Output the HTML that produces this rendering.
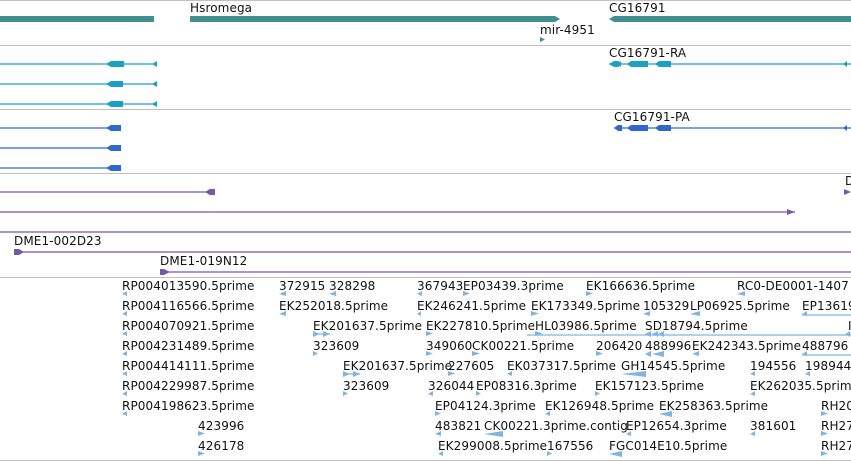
<!DOCTYPE html>
<html><head><meta charset="utf-8"><style>
html,body{margin:0;padding:0;background:#fff;width:851px;height:461px;overflow:hidden}
svg{display:block}
text{font-family:"DejaVu Sans","Liberation Sans",sans-serif;font-size:12px;letter-spacing:0.1px;fill:#111}
</style></head><body>
<svg width="851" height="461" xmlns="http://www.w3.org/2000/svg">
<g stroke="#c0c0c0" stroke-width="1">
<line x1="0" y1="0.5" x2="851" y2="0.5"/><line x1="0" y1="45.5" x2="851" y2="45.5"/>
<line x1="0" y1="109.5" x2="851" y2="109.5"/><line x1="0" y1="173.5" x2="851" y2="173.5"/>
<line x1="0" y1="277.5" x2="851" y2="277.5"/><line x1="0" y1="460.5" x2="851" y2="460.5"/>
</g>
<g fill="#3f8f93">
<rect x="0" y="16" width="154" height="6"/>
<polygon points="190,16 555,16 560,19 555,22 190,22"/>
<polygon points="609,19 614,16 851,16 851,22 614,22"/>
<polygon points="540,37 545,39.5 540,42"/>
</g>
<text x="190" y="12">Hsromega</text><text x="609" y="12">CG16791</text><text x="540" y="34">mir-4951</text>
<g stroke="#1aa0c2" stroke-width="1.3">
<line x1="0" y1="64" x2="157" y2="64"/><line x1="0" y1="84" x2="157" y2="84"/><line x1="0" y1="104" x2="157" y2="104"/>
<line x1="609" y1="64" x2="851" y2="64"/>
</g>
<g fill="#1aa0c2">
<polygon points="106,64 111,61 124,61 124,67 111,67"/><polygon points="106,84 111,81 123,81 123,87 111,87"/><polygon points="106,104 111,101 123,101 123,107 111,107"/>
<polygon points="152,64 157,61 157,67"/><polygon points="152,84 157,81 157,87"/><polygon points="152,104 157,101 157,107"/>
<polygon points="609,64 614,61 619,61 619,67 614,67"/><polygon points="617,64 621,61 621,67"/>
<polygon points="627,64 631,61 648,61 648,67 631,67"/><polygon points="655,64 659,61 671,61 671,67 659,67"/>
<polygon points="843,64 847,61 847,67"/>
</g>
<text x="609" y="57">CG16791-RA</text>
<g stroke="#2e6acc" stroke-width="1.3">
<line x1="0" y1="128" x2="121" y2="128"/><line x1="0" y1="148" x2="121" y2="148"/><line x1="0" y1="168" x2="121" y2="168"/>
<line x1="614" y1="128" x2="851" y2="128"/>
</g>
<g fill="#2e6acc">
<polygon points="106,128 111,125 121,125 121,131 111,131"/><polygon points="106,148 111,145 121,145 121,151 111,151"/><polygon points="106,168 111,165 121,165 121,171 111,171"/>
<polygon points="614,128 618,125 622,125 622,131 618,131"/>
<polygon points="627,128 631,125 648,125 648,131 631,131"/><polygon points="655,128 659,125 671,125 671,131 659,131"/>
<polygon points="843,128 847,125 847,131"/>
</g>
<text x="614" y="121">CG16791-PA</text>
<g stroke="#7657b0" stroke-width="1.3">
<line x1="0" y1="192" x2="210" y2="192"/><line x1="0" y1="212" x2="795" y2="212"/>
<line x1="0" y1="232" x2="851" y2="232"/><line x1="14" y1="252" x2="851" y2="252"/><line x1="160" y1="272" x2="851" y2="272"/>
</g>
<g fill="#7657b0">
<polygon points="205,192 210,189 215,189 215,195 210,195"/>
<polygon points="787,209 795,212 787,215"/>
<polygon points="14,249 19,249 24,252 19,255 14,255"/>
<polygon points="160,269 164,269 170,272 164,275 160,275"/>
<polygon points="844,189 851,192 844,195"/>
</g>
<text x="845" y="185">D</text><text x="14" y="245">DME1-002D23</text><text x="160" y="265">DME1-019N12</text>
<g stroke="#7fb6e0" stroke-width="1.3">
<line x1="802" y1="315" x2="851" y2="315"/><line x1="527" y1="335" x2="851" y2="335"/><line x1="802" y1="355" x2="851" y2="355"/>
<line x1="313" y1="334" x2="330" y2="334"/><line x1="343" y1="374" x2="360" y2="374"/>
</g>
<g fill="#7fb6e0">
<polygon points="122,294 127,291 127,296"/><polygon points="279,294 286,291 286,296"/><polygon points="329,294 336,291 336,296"/><polygon points="417,294 422,291 422,296"/><polygon points="463,291 470,293.5 463,296"/><polygon points="586,291 593,293.5 586,296"/><polygon points="737,294 745,291 745,296"/>
<polygon points="122,314 127,311 127,316"/><polygon points="279,314 286,311 286,316"/><polygon points="417,314 421,311 421,316"/><polygon points="531,311 539,313.5 531,316"/><polygon points="643,314 650,311 650,316"/><polygon points="690,314 700,311 700,316"/><polygon points="802,314 807,311 807,316"/>
<polygon points="122,334 127,331 127,336"/><polygon points="313,331 320,334 313,337"/><polygon points="323,331 330,334 323,337"/><polygon points="426,331 433,333.5 426,336"/><polygon points="535,331 543,333.5 535,336"/><polygon points="645,334 651,331 651,337"/><polygon points="652,334 658,331 658,337"/><polygon points="658,334 664,331 664,337"/><polygon points="845,334 850,331 850,337"/>
<polygon points="122,354 127,351 127,356"/><polygon points="313,351 318,353.5 313,356"/><polygon points="426,351 433,353.5 426,356"/><polygon points="472,351 480,353.5 472,356"/><polygon points="596,351 603,353.5 596,356"/><polygon points="645,354 651,351 651,357"/><polygon points="652,354 664,351 664,357"/><polygon points="692,354 699,351 699,356"/><polygon points="802,354 807,351 807,356"/>
<polygon points="122,374 127,371 127,376"/><polygon points="343,371 350,374 343,377"/><polygon points="353,371 360,374 353,377"/><polygon points="448,371 455,373.5 448,376"/><polygon points="507,374 512,371 512,376"/><polygon points="621,374 646,371 646,377"/><polygon points="750,374 755,371 755,376"/><polygon points="805,374 810,371 810,376"/>
<polygon points="122,394 127,391 127,396"/><polygon points="343,391 348,393.5 343,396"/><polygon points="428,394 433,391 433,396"/><polygon points="476,391 481,393.5 476,396"/><polygon points="595,391 600,393.5 595,396"/><polygon points="750,394 755,391 755,396"/>
<polygon points="122,414 127,411 127,416"/><polygon points="435,411 441,413.5 435,416"/><polygon points="545,414 550,411 550,416"/><polygon points="659,414 672,411 672,417"/><polygon points="821,411 828,413.5 821,416"/>
<polygon points="198,431 205,433.5 198,436"/><polygon points="435,434 441,431 441,436"/><polygon points="484,434 503,431 503,437"/><polygon points="626,434 631,431 631,436"/><polygon points="750,434 755,431 755,436"/><polygon points="821,431 828,433.5 821,436"/>
<polygon points="198,451 205,453.5 198,456"/><polygon points="438,454 443,451 443,456"/><polygon points="547,451 552,453.5 547,456"/><polygon points="609,454 622,451 622,457"/><polygon points="821,451 828,453.5 821,456"/>
</g>
<text x="122" y="290">RP004013590.5prime</text><text x="279" y="290">372915</text><text x="329" y="290">328298</text><text x="417" y="290">367943</text><text x="463" y="290">EP03439.3prime</text><text x="586" y="290">EK166636.5prime</text><text x="737" y="290">RC0-DE0001-1407</text>
<text x="122" y="310">RP004116566.5prime</text><text x="279" y="310">EK252018.5prime</text><text x="417" y="310">EK246241.5prime</text><text x="531" y="310">EK173349.5prime</text><text x="643" y="310">105329</text><text x="690" y="310">LP06925.5prime</text><text x="802" y="310">EP13619</text>
<text x="122" y="330">RP004070921.5prime</text><text x="313" y="330">EK201637.5prime</text><text x="426" y="330">EK227810.5prime</text><text x="535" y="330">HL03986.5prime</text><text x="645" y="330">SD18794.5prime</text><text x="848" y="330">I</text>
<text x="122" y="350">RP004231489.5prime</text><text x="313" y="350">323609</text><text x="426" y="350">349060</text><text x="472" y="350">CK00221.5prime</text><text x="596" y="350">206420</text><text x="645" y="350">488996</text><text x="692" y="350">EK242343.5prime</text><text x="802" y="350">488796</text>
<text x="122" y="370">RP004414111.5prime</text><text x="343" y="370">EK201637.5prime</text><text x="448" y="370">227605</text><text x="507" y="370">EK037317.5prime</text><text x="621" y="370">GH14545.5prime</text><text x="750" y="370">194556</text><text x="805" y="370">198944</text>
<text x="122" y="390">RP004229987.5prime</text><text x="343" y="390">323609</text><text x="428" y="390">326044</text><text x="476" y="390">EP08316.3prime</text><text x="595" y="390">EK157123.5prime</text><text x="750" y="390">EK262035.5prime</text>
<text x="122" y="410">RP004198623.5prime</text><text x="435" y="410">EP04124.3prime</text><text x="545" y="410">EK126948.5prime</text><text x="659" y="410">EK258363.5prime</text><text x="821" y="410">RH20</text>
<text x="198" y="430">423996</text><text x="435" y="430">483821</text><text x="484" y="430">CK00221.3prime.contig</text><text x="626" y="430">EP12654.3prime</text><text x="750" y="430">381601</text><text x="821" y="430">RH27</text>
<text x="198" y="450">426178</text><text x="438" y="450">EK299008.5prime</text><text x="547" y="450">167556</text><text x="609" y="450">FGC014E10.5prime</text><text x="821" y="450">RH27</text>
</svg>
</body></html>
